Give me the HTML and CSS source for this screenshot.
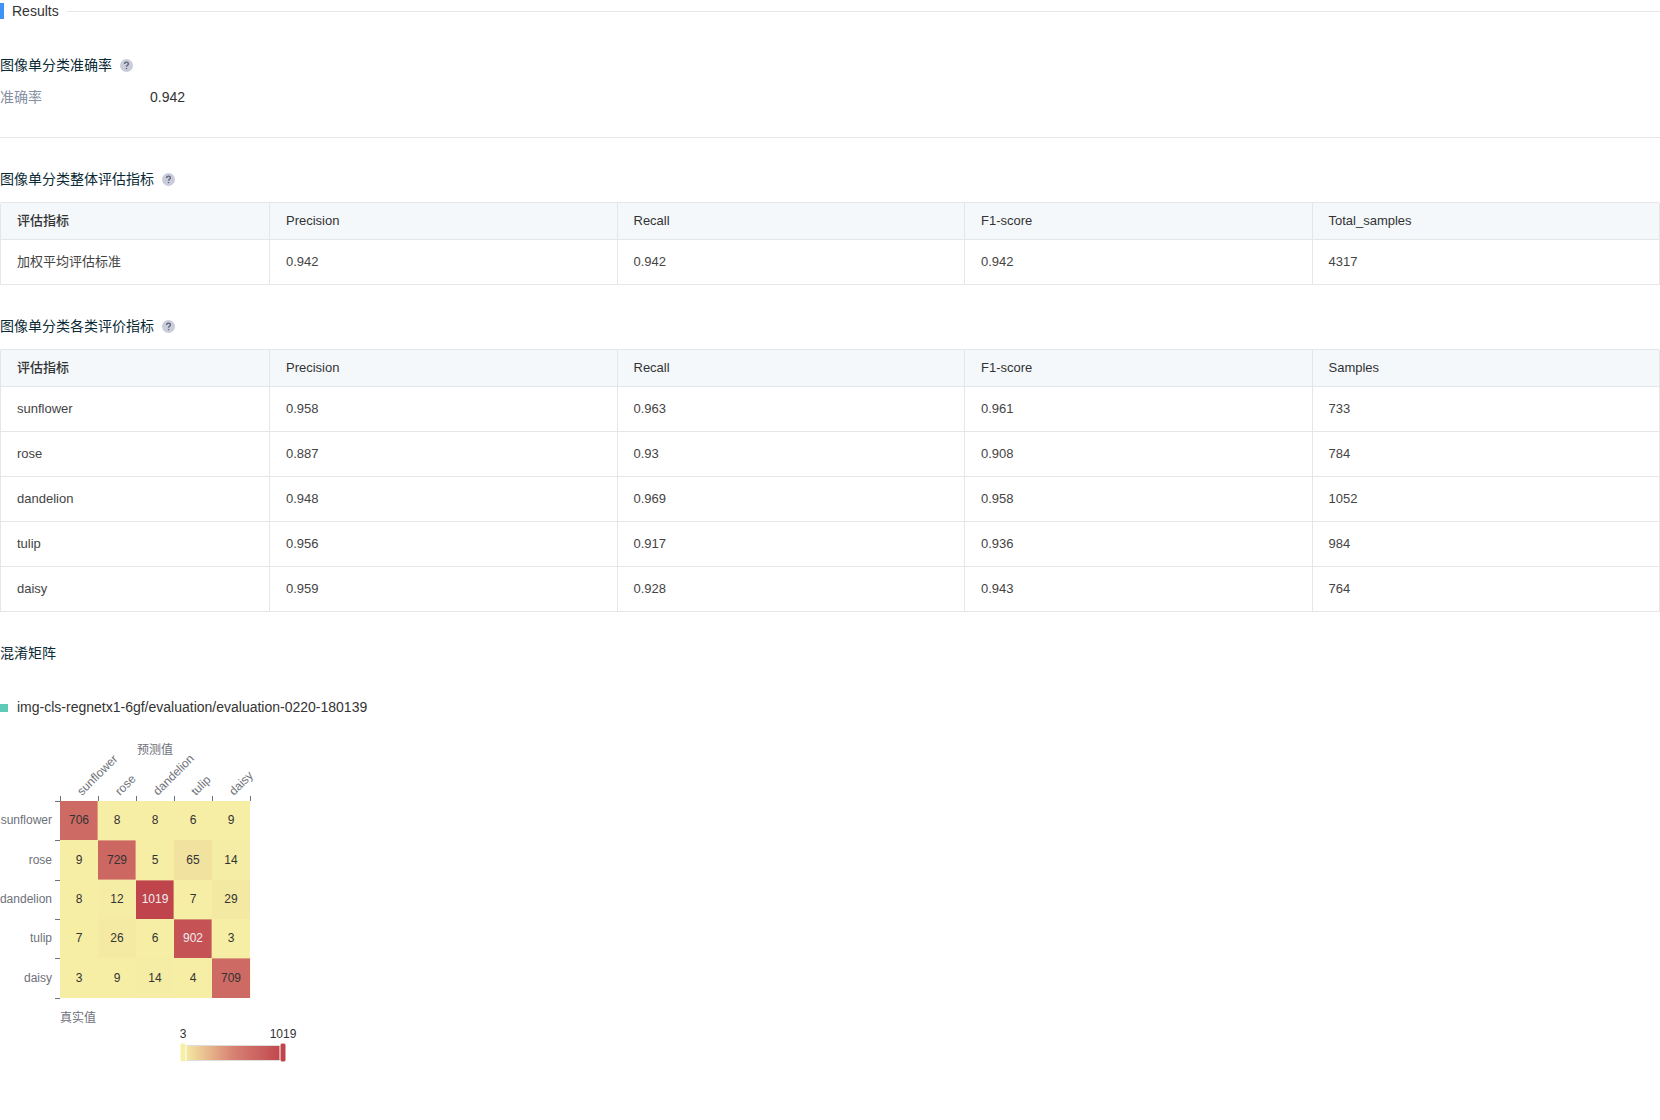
FILE: index.html
```html
<!DOCTYPE html>
<html lang="zh-CN">
<head>
<meta charset="utf-8">
<title>Results</title>
<link rel="stylesheet" href="styles.css">
</head>
<body>
<main class="report">
  <header class="report-title"><h1>Results</h1></header>

  <section class="accuracy">
    <h2>图像单分类准确率
      <button class="help" type="button" aria-label="图像单分类准确率说明"><svg viewBox="0 0 13 13"><circle cx="6.5" cy="6.5" r="6.5"/><path d="M4.6 5.1C4.6 3.9 5.4 3.2 6.5 3.2S8.4 3.9 8.4 4.9C8.4 6.2 6.5 6.3 6.5 7.7"/><path d="M6.5 9V10.2"/></svg></button>
    </h2>
    <dl class="metric"><dt>准确率</dt><dd>0.942</dd></dl>
  </section>

  <section class="block">
    <h2>图像单分类整体评估指标
      <button class="help" type="button" aria-label="整体评估指标说明"><svg viewBox="0 0 13 13"><circle cx="6.5" cy="6.5" r="6.5"/><path d="M4.6 5.1C4.6 3.9 5.4 3.2 6.5 3.2S8.4 3.9 8.4 4.9C8.4 6.2 6.5 6.3 6.5 7.7"/><path d="M6.5 9V10.2"/></svg></button>
    </h2>
    <table class="grid">
      <thead><tr><th class="name">评估指标</th><th>Precision</th><th>Recall</th><th>F1-score</th><th>Total_samples</th></tr></thead>
      <tbody><tr><td>加权平均评估标准</td><td>0.942</td><td>0.942</td><td>0.942</td><td>4317</td></tr></tbody>
    </table>
  </section>

  <section class="block">
    <h2>图像单分类各类评价指标
      <button class="help" type="button" aria-label="各类评价指标说明"><svg viewBox="0 0 13 13"><circle cx="6.5" cy="6.5" r="6.5"/><path d="M4.6 5.1C4.6 3.9 5.4 3.2 6.5 3.2S8.4 3.9 8.4 4.9C8.4 6.2 6.5 6.3 6.5 7.7"/><path d="M6.5 9V10.2"/></svg></button>
    </h2>
    <table class="grid">
      <thead><tr><th class="name">评估指标</th><th>Precision</th><th>Recall</th><th>F1-score</th><th>Samples</th></tr></thead>
      <tbody>
        <tr><td>sunflower</td><td>0.958</td><td>0.963</td><td>0.961</td><td>733</td></tr>
        <tr><td>rose</td><td>0.887</td><td>0.93</td><td>0.908</td><td>784</td></tr>
        <tr><td>dandelion</td><td>0.948</td><td>0.969</td><td>0.958</td><td>1052</td></tr>
        <tr><td>tulip</td><td>0.956</td><td>0.917</td><td>0.936</td><td>984</td></tr>
        <tr><td>daisy</td><td>0.959</td><td>0.928</td><td>0.943</td><td>764</td></tr>
      </tbody>
    </table>
  </section>

  <section class="block">
    <h2>混淆矩阵</h2>
    <p class="series">img-cls-regnetx1-6gf/evaluation/evaluation-0220-180139</p>
    <svg class="matrix" width="320" height="350" viewBox="0 0 320 350" role="img" aria-label="混淆矩阵">
      <defs>
        <linearGradient id="scale"><stop offset="0" stop-color="#f6efa6"/><stop offset=".5" stop-color="#d88273"/><stop offset="1" stop-color="#bf444c"/></linearGradient>
      </defs>
      <g class="cells">
        <rect x="60" y="71" width="190" height="197" fill="#f6eea5"/>
        <rect x="60" y="71" width="38" height="39" fill="#ce6a64"/>
        <rect x="98" y="110" width="38" height="40" fill="#cd6762"/>
        <rect x="174" y="110" width="38" height="40" fill="#f2e2a0"/>
        <rect x="212" y="110" width="38" height="40" fill="#f5eda5"/>
        <rect x="98" y="150" width="38" height="39" fill="#f5eda5"/>
        <rect x="136" y="150" width="38" height="39" fill="#bf444c"/>
        <rect x="212" y="150" width="38" height="39" fill="#f4e9a3"/>
        <rect x="98" y="189" width="38" height="39" fill="#f5eaa4"/>
        <rect x="174" y="189" width="38" height="39" fill="#c55255"/>
        <rect x="136" y="228" width="38" height="40" fill="#f5eda5"/>
        <rect x="212" y="228" width="38" height="40" fill="#ce6a64"/>
      </g>
      <path class="edges" d="M60 110.5H98M97.5 71V110M98 110.5H136M97.5 110V150M135.5 110V150M98 149.5H136M136 150.5H174M135.5 150V189M173.5 150V189M174 189.5H212M173.5 189V228M211.5 189V228M174 228.5H212M212 228.5H250M211.5 228V268M250.5 228V268"/>
      <path class="ticks" d="M60.5 66V71M98.5 66V71M136.5 66V71M174.5 66V71M212.5 66V71M250.5 66V71M55 71.5H60M55 110.5H60M55 150.5H60M55 189.5H60M55 228.5H60M55 268.5H60"/>
      <g class="values">
        <text x="79" y="94">706</text><text x="117" y="94">8</text><text x="155" y="94">8</text><text x="193" y="94">6</text><text x="231" y="94">9</text>
        <text x="79" y="134">9</text><text x="117" y="134">729</text><text x="155" y="134">5</text><text x="193" y="134">65</text><text x="231" y="134">14</text>
        <text x="79" y="173">8</text><text x="117" y="173">12</text><text x="155" y="173" class="light">1019</text><text x="193" y="173">7</text><text x="231" y="173">29</text>
        <text x="79" y="212">7</text><text x="117" y="212">26</text><text x="155" y="212">6</text><text x="193" y="212" class="light">902</text><text x="231" y="212">3</text>
        <text x="79" y="252">3</text><text x="117" y="252">9</text><text x="155" y="252">14</text><text x="193" y="252">4</text><text x="231" y="252">709</text>
      </g>
      <g class="rows">
        <text x="52" y="94">sunflower</text><text x="52" y="134">rose</text><text x="52" y="173">dandelion</text><text x="52" y="212">tulip</text><text x="52" y="252">daisy</text>
      </g>
      <g class="cols">
        <text transform="translate(82 66) rotate(-45)">sunflower</text>
        <text transform="translate(120 66) rotate(-45)">rose</text>
        <text transform="translate(158 66) rotate(-45)">dandelion</text>
        <text transform="translate(196 66) rotate(-45)">tulip</text>
        <text transform="translate(234 66) rotate(-45)">daisy</text>
      </g>
      <text class="axis" x="137" y="24">预测值</text>
      <text class="axis" x="60" y="292">真实值</text>
      <g class="values"><text x="183" y="308">3</text><text x="283" y="308">1019</text></g>
      <rect x="183" y="315" width="100" height="16" fill="#ddd"/>
      <rect x="183" y="316" width="100" height="14" fill="url(#scale)"/>
      <rect class="handle" x="180" y="313" width="6" height="19" rx="2" fill="#f6efa6"/>
      <rect class="handle" x="280" y="313" width="6" height="19" rx="2" fill="#bf444c"/>
    </svg>
  </section>
</main>
</body>
</html>
```
FILE: styles.css
```css
* { box-sizing: border-box; }
body {
  margin: 0;
  background: #fff;
  color: #333;
  font: 14px/22px "Liberation Sans", "Noto Sans CJK SC", sans-serif;
}
h1, h2, p, dl, dd { margin: 0; font-weight: 400; }

.report-title { display: flex; align-items: center; gap: 8px; height: 22px; }
.report-title::before { content: ""; width: 4px; height: 16px; background: #3d94f6; }
.report-title::after { content: ""; flex: 1; height: 1px; border-bottom: 1px solid #e4e6e9; }
.report-title h1 { font-size: 14px; }

h2 {
  display: flex;
  align-items: center;
  gap: 8px;
  font-size: 14px;
  line-height: 22px;
  color: #0a2a35;
}
.help { display: flex; padding: 0; border: 0; background: none; }
.help svg { width: 13px; height: 13px; }
.help circle { fill: #c9ccdb; }
.help path { fill: none; stroke: #5c6070; stroke-width: 1.3; }

.accuracy { padding: 32px 0 29px; border-bottom: 1px solid #e4e6e9; }
.metric { display: flex; margin-top: 10px; }
.metric dt { width: 150px; color: #868fa3; }
.block { padding-top: 30px; }

.grid {
  width: 100%;
  margin-top: 12px;
  table-layout: fixed;
  border-collapse: separate;
  border-spacing: 0;
  border: solid #e4e7ea;
  border-width: 1px 0 0 1px;
  border-radius: 2px 2px 0 0;
  font-size: 13px;
  line-height: 20px;
}
.grid th, .grid td {
  padding: 0 16px;
  border: solid #e4e7ea;
  border-width: 0 1px 1px 0;
  text-align: left;
}
.grid th { height: 37px; background: #f4f8fb; font-weight: 500; }
.grid td { height: 45px; color: #444; }
.grid .name { width: 269px; }

.series { display: flex; align-items: center; gap: 9px; margin-top: 32px; }
.series::before { content: ""; width: 8px; height: 8px; margin-top: 2px; background: #5dcbb5; }

.matrix { display: block; margin-top: 12px; font-size: 12px; }
.edges { fill: none; stroke: #f6eea5; stroke-opacity: .4; }
.ticks { fill: none; stroke: #6e7079; }
.values { text-anchor: middle; fill: #333; }
.values .light { fill: #eee; }
.rows { text-anchor: end; }
.rows, .cols, .axis { fill: #6e7079; }
.handle { stroke: #fff; }
```
